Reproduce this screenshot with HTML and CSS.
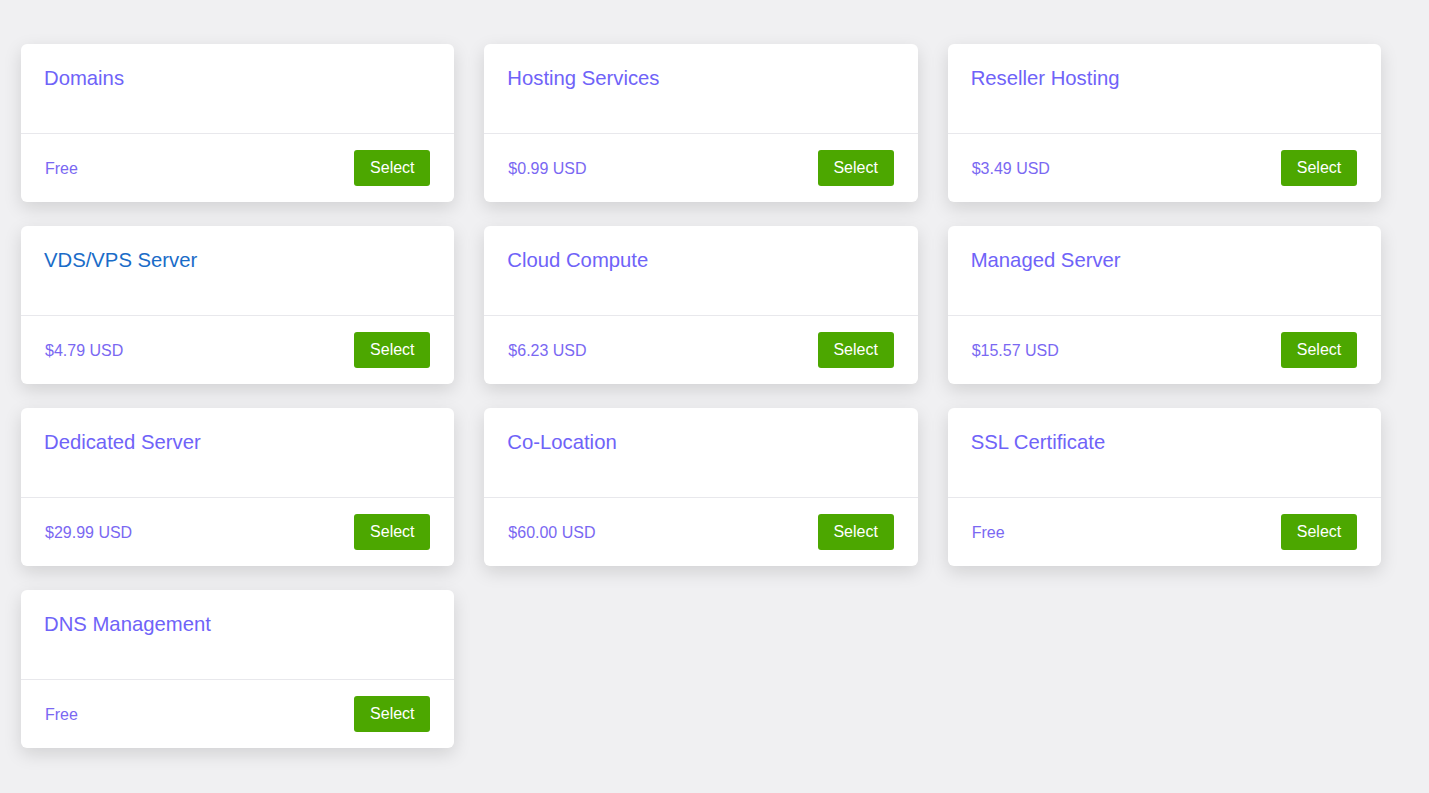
FILE: index.html
```html
<!DOCTYPE html>
<html>
<head>
    <link rel="stylesheet" href="styles.css">
</head>
<body>
    <div class="grid">
        <div class="card">
            <div class="card-head"><a class="title">Domains</a></div>
            <div class="card-foot"><span class="price">Free</span><button class="select">Select</button></div>
        </div>
        <div class="card">
            <div class="card-head"><a class="title">Hosting Services</a></div>
            <div class="card-foot"><span class="price">$0.99 USD</span><button class="select">Select</button></div>
        </div>
        <div class="card">
            <div class="card-head"><a class="title">Reseller Hosting</a></div>
            <div class="card-foot"><span class="price">$3.49 USD</span><button class="select">Select</button></div>
        </div>
        <div class="card">
            <div class="card-head"><a class="title visited">VDS/VPS Server</a></div>
            <div class="card-foot"><span class="price">$4.79 USD</span><button class="select">Select</button></div>
        </div>
        <div class="card">
            <div class="card-head"><a class="title">Cloud Compute</a></div>
            <div class="card-foot"><span class="price">$6.23 USD</span><button class="select">Select</button></div>
        </div>
        <div class="card">
            <div class="card-head"><a class="title">Managed Server</a></div>
            <div class="card-foot"><span class="price">$15.57 USD</span><button class="select">Select</button></div>
        </div>
        <div class="card">
            <div class="card-head"><a class="title">Dedicated Server</a></div>
            <div class="card-foot"><span class="price">$29.99 USD</span><button class="select">Select</button></div>
        </div>
        <div class="card">
            <div class="card-head"><a class="title">Co-Location</a></div>
            <div class="card-foot"><span class="price">$60.00 USD</span><button class="select">Select</button></div>
        </div>
        <div class="card">
            <div class="card-head"><a class="title">SSL Certificate</a></div>
            <div class="card-foot"><span class="price">Free</span><button class="select">Select</button></div>
        </div>
        <div class="card">
            <div class="card-head"><a class="title">DNS Management</a></div>
            <div class="card-foot"><span class="price">Free</span><button class="select">Select</button></div>
        </div>
    </div>
</body>
</html>
```

FILE: styles.css
```css
html {
    background-color: #f0f0f2;
}

body {
    margin: 0;
    min-height: 793px;
    background-color: #f0f0f2;
    font-family: "Liberation Sans", Arial, sans-serif;
}

.grid {
    display: grid;
    grid-template-columns: repeat(3, 1fr);
    column-gap: 30px;
    row-gap: 24px;
    width: 1360px;
    padding: 44px 0 40px 21px;
}

.card {
    background-color: #fff;
    border-radius: 6px;
    box-shadow: 0 6px 18px rgba(0, 0, 0, 0.13);
}

.card-head {
    height: 90px;
    box-sizing: border-box;
    padding: 22px 23px;
    border-bottom: 1px solid #e8e8ec;
}

.title {
    font-size: 20.3px;
    line-height: 24px;
    color: #6f63f8;
    cursor: pointer;
}

.title.visited {
    color: #1a6cc8;
}

.card-foot {
    display: flex;
    justify-content: space-between;
    align-items: center;
    padding: 16px 24px 16px 24px;
}

.price {
    font-size: 16px;
    padding-top: 2px;
    color: #7a68f2;
}

.select {
    background-color: #4ca700;
    color: #fff;
    border: none;
    border-radius: 3px;
    font-family: "Liberation Sans", Arial, sans-serif;
    font-size: 16px;
    width: 76px;
    height: 36px;
    padding: 0 0 1px;
    cursor: pointer;
}
```
